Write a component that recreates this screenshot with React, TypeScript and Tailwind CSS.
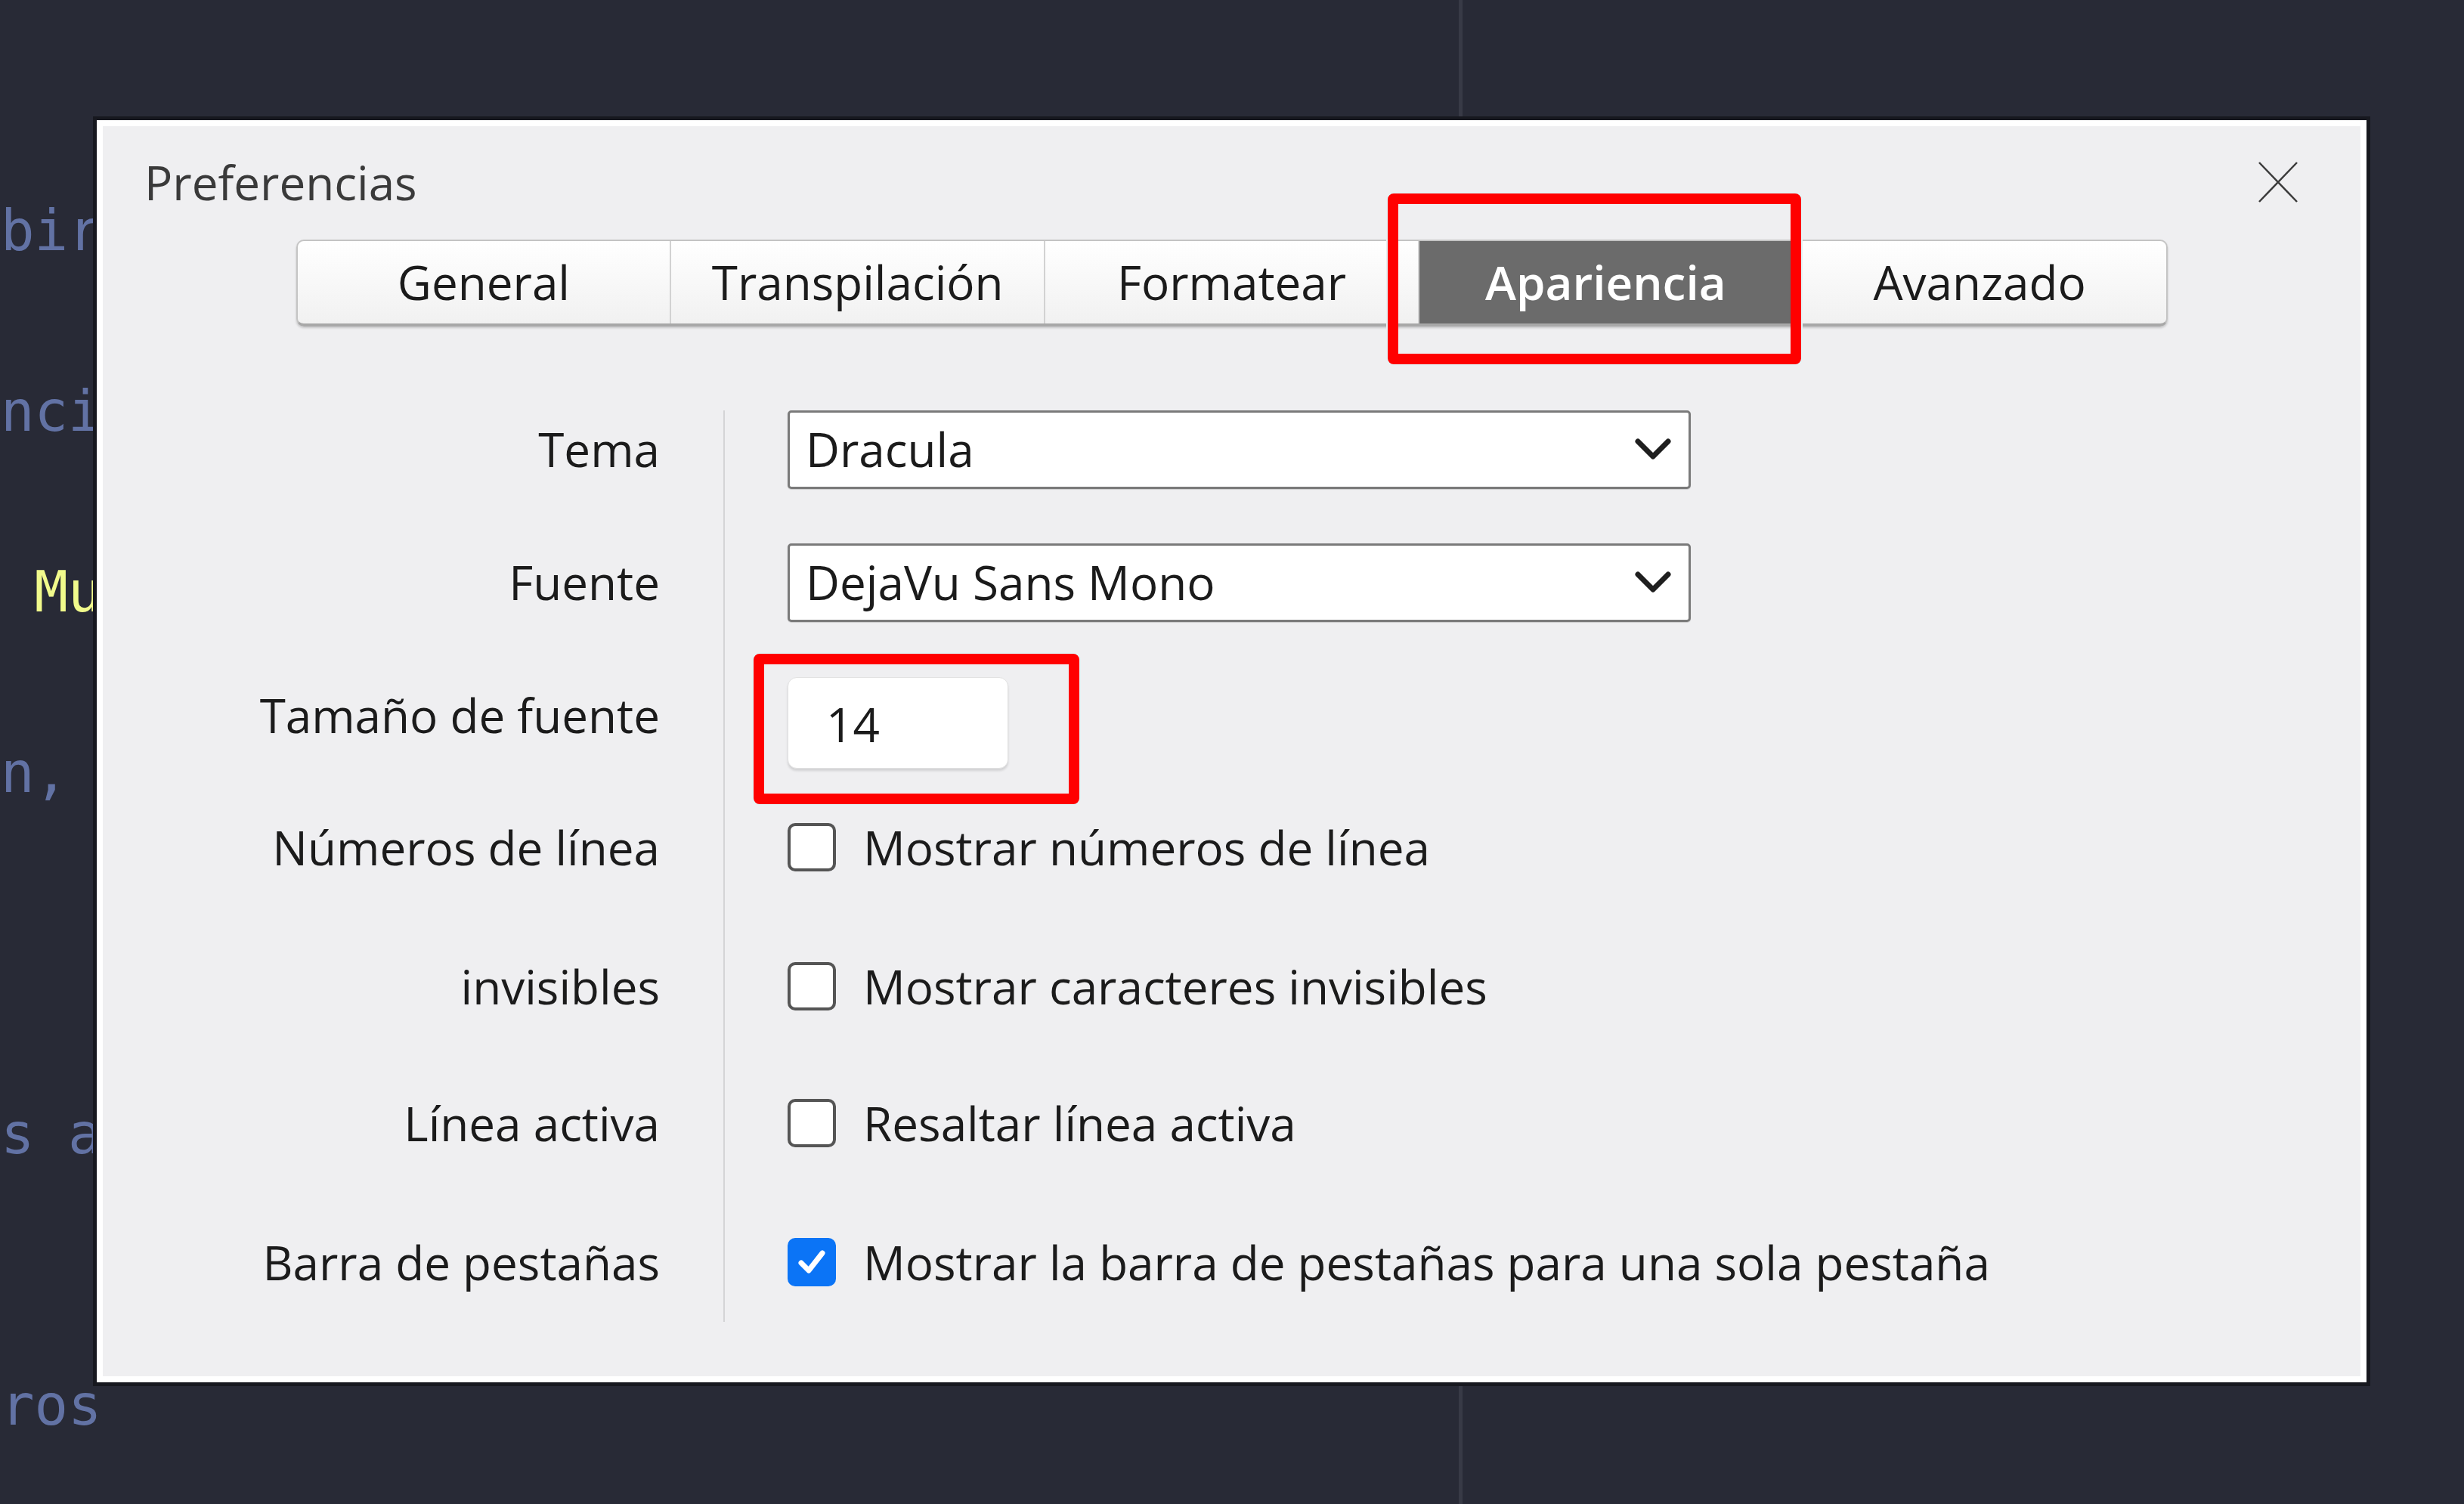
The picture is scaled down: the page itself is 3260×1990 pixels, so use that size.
import React from "react";

const codeLines: { text: string; color: string }[] = [
  { text: "", color: "" },
  { text: "", color: "" },
  { text: "bir", color: "text-[#6272a4]" },
  { text: "", color: "" },
  { text: "nci", color: "text-[#6272a4]" },
  { text: "", color: "" },
  { text: " Mu", color: "text-[#f1fa8c]" },
  { text: "", color: "" },
  { text: "n,", color: "text-[#6272a4]" },
  { text: "", color: "" },
  { text: "", color: "" },
  { text: "", color: "" },
  { text: "s a", color: "text-[#6272a4]" },
  { text: "", color: "" },
  { text: "", color: "" },
  { text: "ros", color: "text-[#6272a4]" },
  { text: "", color: "" },
];

const tabs = ["General", "Transpilación", "Formatear", "Apariencia", "Avanzado"];

function Chevron() {
  return (
    <svg width="50" height="32" viewBox="0 0 50 32" className="shrink-0">
      <polyline points="5,5 25,25 45,5" fill="none" stroke="#1f1f1f" strokeWidth="7" strokeLinecap="round" strokeLinejoin="round" />
    </svg>
  );
}

function Select({ value }: { value: string }) {
  return (
    <div className="w-[1195px] h-[104px] bg-white border-[3px] border-[#7a7a7a] rounded-[5px] flex items-center justify-between pl-[21px] pr-[22px] shadow-[0_1px_1px_rgba(0,0,0,0.15)]">
      <span>{value}</span>
      <Chevron />
    </div>
  );
}

function Checkbox({ checked }: { checked?: boolean }) {
  if (checked) {
    return (
      <div className="w-[64px] h-[64px] rounded-[10px] bg-[#0b74f6] flex items-center justify-center shrink-0">
        <svg width="44" height="44" viewBox="0 0 44 44">
          <polyline points="8,23 18,33 36,10" fill="none" stroke="#ffffff" strokeWidth="7" strokeLinecap="round" strokeLinejoin="round" />
        </svg>
      </div>
    );
  }
  return <div className="w-[64px] h-[64px] rounded-[10px] bg-white border-[4px] border-[#555555] shrink-0" />;
}

export default function App() {
  const font = { fontFamily: '"Open Sans", "Noto Sans", sans-serif' };
  return (
    <div className="relative w-[3260px] h-[1990px] bg-[#282a36] overflow-hidden">
      {/* editor behind */}
      <div className="absolute left-[1930px] top-0 bottom-0 w-[5px] bg-[#383a46]" />
      <div
        className="flex flex-col pt-[7px] pl-[1px] text-[74px] leading-[119.5px] whitespace-pre"
        style={{ fontFamily: '"DejaVu Sans Mono", monospace' }}
      >
        {codeLines.map((l, i) => (
          <div key={i} className={`h-[119.5px] ${l.color}`}>
            {l.text}
          </div>
        ))}
      </div>

      {/* dialog */}
      <div
        className="absolute left-[128px] top-[159px] w-[3003px] h-[1670px] border-[8px] border-white bg-[#efeff1] shadow-[0_0_0_5px_#17181f] text-[62px] text-[#1b1b1b] flex flex-col"
        style={font}
      >
        {/* title row */}
        <div className="h-[148px] flex items-center justify-between pl-[55px] pr-[82px] shrink-0">
          <span className="text-[#3a3a3a]">Preferencias</span>
          <svg width="54" height="56" viewBox="0 0 54 56">
            <line x1="2" y1="2" x2="52" y2="54" stroke="#3a3a3a" strokeWidth="2.5" />
            <line x1="52" y1="2" x2="2" y2="54" stroke="#3a3a3a" strokeWidth="2.5" />
          </svg>
        </div>

        {/* tabs */}
        <div className="flex justify-center mt-[2px] shrink-0">
          <div className="flex h-[115px] w-[2476px] rounded-[10px] border-[2px] border-[#c4c4c4] border-b-[4px] border-b-[#a8a8a8] bg-gradient-to-b from-white to-[#f1f1f1] shadow-[0_2px_3px_rgba(0,0,0,0.18)] overflow-hidden">
            {tabs.map((t, i) => {
              const active = t === "Apariencia";
              return (
                <div
                  key={t}
                  className={`flex-1 flex items-center justify-center ${i > 0 ? "border-l-[2px] border-[#d2d2d2]" : ""} ${
                    active ? "bg-[#6b6b6b] text-white font-semibold" : ""
                  }`}
                >
                  {t}
                </div>
              );
            })}
          </div>
        </div>

        {/* form */}
        <div className="flex mt-[111px]">
          <div className="w-[737px] flex flex-col items-end mr-[84px]">
            <div className="h-[103px] flex items-center">Tema</div>
            <div className="h-[105px] mt-[72px] flex items-center">Fuente</div>
            <div className="h-[121px] mt-[73px] flex items-center pb-[20px]">Tamaño de fuente</div>
            <div className="h-[64px] mt-[72px] flex items-center">Números de línea</div>
            <div className="h-[64px] mt-[120px] flex items-center">invisibles</div>
            <div className="h-[64px] mt-[117px] flex items-center">Línea activa</div>
            <div className="h-[64px] mt-[120px] flex items-center">Barra de pestañas</div>
          </div>
          <div className="border-l-[2px] border-[#d4d4d6] pl-[83px] pb-[47px] flex flex-col">
            <div className="h-[103px] flex items-center">
              <Select value="Dracula" />
            </div>
            <div className="h-[105px] mt-[72px] flex items-center">
              <Select value="DejaVu Sans Mono" />
            </div>
            <div className="h-[121px] mt-[73px] flex items-center">
              <div className="w-[292px] h-[121px] bg-white rounded-[12px] border border-[#e2e2e2] shadow-[0_3px_3px_rgba(0,0,0,0.12)] flex items-center pl-[50px] pt-[4px]">
                14
              </div>
            </div>
            <div className="h-[64px] mt-[72px] flex items-center gap-[36px]">
              <Checkbox />
              <span>Mostrar números de línea</span>
            </div>
            <div className="h-[64px] mt-[120px] flex items-center gap-[36px]">
              <Checkbox />
              <span>Mostrar caracteres invisibles</span>
            </div>
            <div className="h-[64px] mt-[117px] flex items-center gap-[36px]">
              <Checkbox />
              <span>Resaltar línea activa</span>
            </div>
            <div className="h-[64px] mt-[120px] flex items-center gap-[36px]">
              <Checkbox checked />
              <span>Mostrar la barra de pestañas para una sola pestaña</span>
            </div>
          </div>
        </div>
      </div>

      {/* red annotation boxes */}
      <div className="absolute left-[1836px] top-[256px] w-[547px] h-[226px] border-[14px] border-[#ff0000] rounded-[8px] shadow-[0_0_0_2px_#e4f4f6]" />
      <div className="absolute left-[997px] top-[865px] w-[431px] h-[199px] border-[14px] border-[#ff0000] rounded-[8px] shadow-[0_0_0_2px_#e4f4f6]" />
    </div>
  );
}
